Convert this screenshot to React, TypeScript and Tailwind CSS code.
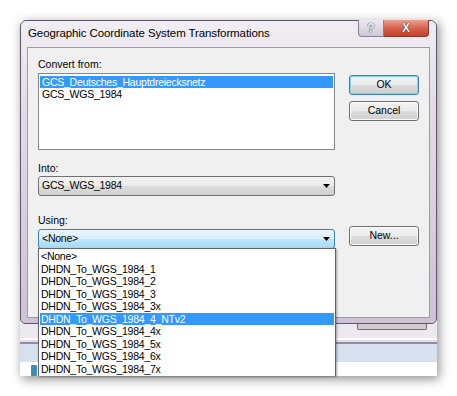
import React from 'react';

const dropItems: string[] = [
  '<None>',
  'DHDN_To_WGS_1984_1',
  'DHDN_To_WGS_1984_2',
  'DHDN_To_WGS_1984_3',
  'DHDN_To_WGS_1984_3x',
  'DHDN_To_WGS_1984_4_NTv2',
  'DHDN_To_WGS_1984_4x',
  'DHDN_To_WGS_1984_5x',
  'DHDN_To_WGS_1984_6x',
  'DHDN_To_WGS_1984_7x',
];

function Arrow(): React.ReactElement {
  return (
    <svg width="7" height="4" viewBox="0 0 7 4">
      <polygon points="0,0 7,0 3.5,4" fill="#000" />
    </svg>
  );
}

function Button({ label, primary }: { label: string; primary?: boolean }): React.ReactElement {
  return (
    <div
      className={`h-[20px] w-full flex items-center justify-center rounded-[3px] border text-[10.5px] text-black bg-[linear-gradient(to_bottom,#f2f2f2_0%,#ebebeb_50%,#dddddd_51%,#cfcfcf_100%)] ${
        primary
          ? 'border-[#3c7fb1] shadow-[inset_0_0_0_1px_#7fd6f5]'
          : 'border-[#707070] shadow-[inset_0_0_0_1px_#fbfbfb]'
      }`}
    >
      {label}
    </div>
  );
}

export default function App(): React.ReactElement {
  return (
    <div className="w-[457px] h-[396px] bg-white overflow-hidden font-['Liberation_Sans',Arial,sans-serif]">
      <div className="ml-[20px] mt-[20px] w-[417px] h-[356px] relative flex flex-col bg-white shadow-[2px_3px_10px_rgba(0,0,0,0.45)]">
        {/* Dialog window */}
        <div className="h-[304px] flex flex-col rounded-t-[6px] rounded-b-[5px] border border-[#5f566a] bg-[linear-gradient(to_bottom,#f1eef3_0%,#e2dbe7_30%,#cdc2d6_100%)] px-[6px] pb-[5px]">
          {/* Title bar */}
          <div className="h-[26px] flex items-start justify-between">
            <span className="mt-[5px] ml-[1px] text-[11.5px] tracking-[-0.1px] leading-[14px] text-black">
              Geographic Coordinate System Transformations
            </span>
            <div className="flex mr-[1px] -mt-px">
              <div className="w-[26px] h-[17px] flex items-center justify-center rounded-bl-[4px] border border-[#8a8294] border-t-0 bg-[linear-gradient(to_bottom,#ece8ef,#cfc8d6)] text-[12px] font-bold text-[#f8f8f8] [text-shadow:0_0_1px_#333,0_0_1px_#333]">
                ?
              </div>
              <div className="w-[45px] h-[17px] flex items-center justify-center rounded-br-[4px] border border-[#8a3a2c] border-t-0 border-l-0 bg-[linear-gradient(to_bottom,#e9a293_0%,#d7644e_50%,#c63f28_100%)] text-[12px] font-bold text-white [text-shadow:0_0_1px_#3a0f08,0_0_1px_#3a0f08]">
                X
              </div>
            </div>
          </div>

          {/* Client area */}
          <div className="flex-1 flex bg-[#f0f0f0] border border-[#a396ad] pl-[10px]">
            <div className="w-[297px] flex flex-col pt-[9px] text-[10.5px] text-black">
              <div className="h-[14px] leading-[14px]">Convert from:</div>
              <div className="mt-[2px] h-[77px] border border-[#828790] bg-white pt-[2px] px-px tracking-[-0.25px]">
                <div className="h-[12px] leading-[12px] bg-[#3399ff] text-white pl-[2px]">GCS_Deutsches_Hauptdreiecksnetz</div>
                <div className="h-[12px] leading-[12px] pl-[2px]">GCS_WGS_1984</div>
              </div>

              <div className="mt-[11px] h-[14px] leading-[14px]">Into:</div>
              <div className="mt-px h-[20px] flex items-center justify-between rounded-[3px] border border-[#707070] bg-[linear-gradient(to_bottom,#f2f2f2_0%,#ebebeb_50%,#dddddd_51%,#cfcfcf_100%)] pl-[3px] pr-[4px] tracking-[-0.25px]">
                <span>GCS_WGS_1984</span>
                <Arrow />
              </div>

              <div className="mt-[17px] h-[14px] leading-[14px]">Using:</div>
              <div className="mt-[2px] h-[20px] flex items-center justify-between rounded-[3px] border border-[#3c7fb1] bg-[linear-gradient(to_bottom,#eaf6fd_0%,#d9f0fc_50%,#bee6fd_51%,#a7d9f5_100%)] pl-[3px] pr-[4px] tracking-[-0.25px]">
                <span>&lt;None&gt;</span>
                <Arrow />
              </div>
            </div>

            <div className="ml-[14px] w-[70px] flex flex-col pt-[27px]">
              <Button label="OK" primary />
              <div className="mt-[6px]">
                <Button label="Cancel" />
              </div>
              <div className="mt-[105px]">
                <Button label="New..." />
              </div>
            </div>
          </div>
        </div>

        {/* Application behind the dialog */}
        <div className="h-[14px] bg-[#ece8f0] flex justify-end pr-[10px]">
          <div className="w-[70px] h-[6px] rounded-b-[2px] border border-t-0 border-[#6f6f6f] bg-[#cfcdd1]" />
        </div>
        <div className="h-[2px] bg-white" />
        <div className="h-[2px] bg-[#e7d9ee]" />
        <div className="h-[2px] bg-[#958c9e]" />
        <div className="h-[18px] bg-[#d5e1ef]" />
        <div className="flex-1 bg-white flex items-end pl-[11px]">
          <div className="w-[6px] h-[11px] bg-[#3a8fb6] rounded-[1px]" />
        </div>

        {/* Open dropdown list */}
        <div className="absolute left-[18px] top-[228px] w-[298px] bottom-0 border border-b-0 border-[#646464] bg-white pt-px px-px overflow-hidden shadow-[1px_1px_2px_rgba(0,0,0,0.35)] text-[10.5px] tracking-[-0.25px] text-black">
          {dropItems.map((item) => (
            <div
              key={item}
              className={`h-[12.5px] leading-[12.5px] pl-px ${
                item === 'DHDN_To_WGS_1984_4_NTv2' ? 'bg-[#3399ff] text-white' : ''
              }`}
            >
              {item}
            </div>
          ))}
        </div>
      </div>
    </div>
  );
}
